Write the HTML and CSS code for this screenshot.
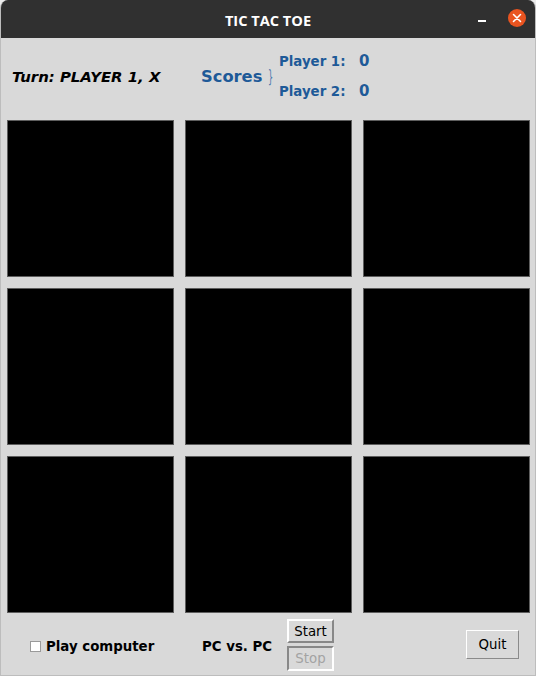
FILE: index.html
```html
<!DOCTYPE html>
<html>
<head>
<meta charset="utf-8">
<title>TIC TAC TOE</title>
<link rel="stylesheet" href="styles.css">
</head>
<body>
<div class="window">
  <div class="titlebar">
    <div class="tb-side"></div>
    <div class="tb-title">TIC TAC TOE</div>
    <div class="tb-side tb-controls">
      <span class="tb-min"></span>
      <span class="tb-close">
        <svg width="18" height="18" viewBox="0 0 18 18"><path d="M5.5 5.5 L12.5 12.5 M12.5 5.5 L5.5 12.5" stroke="#fff" stroke-width="1.6" stroke-linecap="round"/></svg>
      </span>
    </div>
  </div>
  <div class="header">
    <div class="turn">Turn: PLAYER 1, X</div>
    <div class="scores">Scores</div>
    <div class="brace">}</div>
    <div class="players">
      <div class="prow"><span class="pname">Player 1:</span><span class="pscore">0</span></div>
      <div class="prow"><span class="pname">Player 2:</span><span class="pscore">0</span></div>
    </div>
  </div>
  <div class="board">
    <div class="cell"></div><div class="cell"></div><div class="cell"></div>
    <div class="cell"></div><div class="cell"></div><div class="cell"></div>
    <div class="cell"></div><div class="cell"></div><div class="cell"></div>
  </div>
  <div class="footer">
    <div class="check-group"><span class="checkbox"></span><span class="label">Play computer</span></div>
    <div class="pcvpc label">PC vs. PC</div>
    <div class="btn-col">
      <div class="btn raised">Start</div>
      <div class="btn sunken">Stop</div>
    </div>
    <div class="btn quit">Quit</div>
  </div>
</div>
</body>
</html>
```
FILE: styles.css
```css
html, body {
  margin: 0;
  padding: 0;
  background: #ececec;
}
.window {
  width: 536px;
  height: 676px;
  background: #d9d9d9;
  display: flex;
  flex-direction: column;
  font-family: "DejaVu Sans", sans-serif;
  border-radius: 8px 8px 0 0;
  overflow: hidden;
  box-sizing: border-box;
  border-left: 1px solid #bdbdbd;
  border-right: 1px solid #bdbdbd;
  border-bottom: 1px solid #bdbdbd;
}
.titlebar {
  height: 38px;
  flex: none;
  background: #303030;
  display: grid;
  grid-template-columns: 1fr auto 1fr;
  align-items: center;
  color: #fff;
}
.tb-title {
  font-family: "Open Sans", "DejaVu Sans", sans-serif;
  font-weight: 700;
  font-size: 14.6px;
  padding-top: 1px;
}
.tb-controls {
  display: flex;
  align-items: center;
  justify-content: flex-end;
  padding-right: 9px;
  gap: 22px;
}
.tb-min {
  width: 8px;
  height: 1.5px;
  background: #fff;
  margin-top: 4px;
}
.tb-close {
  width: 18px;
  height: 18px;
  border-radius: 50%;
  background: #e95420;
  display: flex;
  margin-top: -2px;
}
.header {
  height: 82px;
  flex: none;
  box-sizing: border-box;
  padding: 8px 0 14px 11px;
  display: flex;
  align-items: center;
  color: #1e5a98;
}
.turn {
  width: 189px;
  color: #000;
  font-weight: 700;
  font-style: italic;
  font-size: 14.9px;
  padding-top: 1px;
}
.scores {
  font-weight: 700;
  font-size: 16.3px;
  width: 67px;
}
.brace {
  font-family: "DejaVu Sans", sans-serif;
  font-weight: 400;
  font-size: 18px;
  color: #4a78ad;
  width: 11px;
  transform: scaleX(0.45);
  transform-origin: left center;
  padding-top: 1px;
}
.players {
  display: flex;
  flex-direction: column;
}
.prow {
  height: 30px;
  display: flex;
  align-items: center;
  font-weight: 700;
}
.pname {
  font-size: 13.33px;
  width: 80px;
}
.pscore {
  font-size: 15px;
}
.board {
  flex: none;
  display: grid;
  grid-template-columns: repeat(3, 167px);
  grid-template-rows: repeat(3, 157px);
  gap: 11px;
  padding-left: 6px;
}
.cell {
  background: #000;
  border: 1px solid #5e5e5e;
}
.footer {
  flex: 1;
  display: flex;
  align-items: center;
  padding: 6px 16px 5px 29px;
  font-size: 13.33px;
  font-weight: 700;
}
.check-group {
  width: 172px;
  display: flex;
  align-items: center;
  padding-top: 3px;
}
.checkbox {
  width: 11px;
  height: 11px;
  background: #fff;
  border: 1px solid #9a9a9a;
  box-sizing: border-box;
  margin-right: 5px;
}
.label {
  color: #000;
}
.pcvpc {
  width: 85px;
  padding-top: 3px;
}
.btn-col {
  display: flex;
  flex-direction: column;
  gap: 3px;
}
.btn {
  font-family: "DejaVu Sans", sans-serif;
  font-weight: 400;
  font-size: 13.33px;
  display: flex;
  align-items: center;
  justify-content: center;
  box-sizing: border-box;
  background: #d9d9d9;
}
.raised {
  width: 47px;
  height: 24px;
  border: 2px solid;
  border-color: #ffffff #888888 #888888 #ffffff;
  color: #000;
}
.sunken {
  width: 47px;
  height: 25px;
  border: 2px solid;
  border-color: #888888 #ffffff #ffffff #888888;
  color: #a3a3a3;
}
.quit {
  margin-left: auto;
  width: 53px;
  height: 29px;
  border: 1px solid;
  border-color: #ffffff #8a8a8a #8a8a8a #ffffff;
  color: #000;
  margin-top: -2px;
}
```
